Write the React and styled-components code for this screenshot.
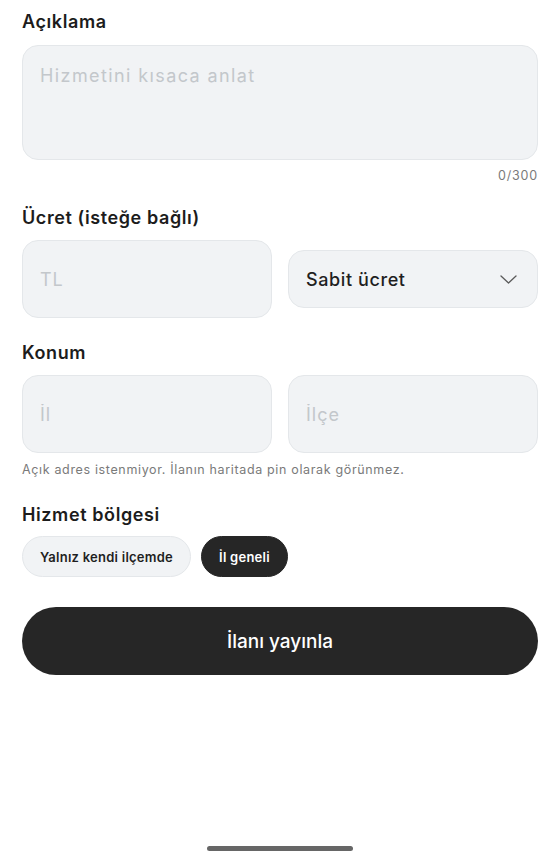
import { useState } from "react";
import styled, { createGlobalStyle } from "styled-components";

const GlobalStyle = createGlobalStyle`
  html, body {
    margin: 0;
    padding: 0;
    background: #ffffff;
  }
  body {
    font-family: Inter, "Noto Sans", "Liberation Sans", sans-serif;
    color: #1f1f1f;
  }
  * {
    box-sizing: border-box;
  }
`;

const MAX = 300;

function App() {
  const [text, setText] = useState("");
  const [area, setArea] = useState("il");

  return (
    <>
      <GlobalStyle />
      <Page>
        <Label>Açıklama</Label>
        <TextArea
          placeholder="Hizmetini kısaca anlat"
          value={text}
          maxLength={MAX}
          onChange={(e) => setText(e.target.value)}
        />
        <Counter>
          {text.length}/{MAX}
        </Counter>

        <Label $top={20}>Ücret (isteğe bağlı)</Label>
        <Row>
          <Input placeholder="TL" />
          <Select type="button">
            <span>Sabit ücret</span>
            <svg width="17" height="9" viewBox="0 0 17 9" fill="none">
              <polyline
                points="1,1 8.5,8 16,1"
                stroke="#5a5a5a"
                strokeWidth="1.3"
                strokeLinecap="round"
                strokeLinejoin="round"
              />
            </svg>
          </Select>
        </Row>

        <Label $top={23}>Konum</Label>
        <Row>
          <Input placeholder="İl" />
          <Input placeholder="İlçe" />
        </Row>
        <Helper>Açık adres istenmiyor. İlanın haritada pin olarak görünmez.</Helper>

        <Label $top={24} $bottom={9}>Hizmet bölgesi</Label>
        <Chips>
          <Chip
            type="button"
            $active={area === "ilce"}
            onClick={() => setArea("ilce")}
          >
            Yalnız kendi ilçemde
          </Chip>
          <Chip
            type="button"
            $active={area === "il"}
            onClick={() => setArea("il")}
          >
            İl geneli
          </Chip>
        </Chips>

        <Submit type="button">İlanı yayınla</Submit>
      </Page>
      <HomeIndicator />
    </>
  );
}

export default App;

const Page = styled.div`
  padding: 10px 22px 0;
  display: flex;
  flex-direction: column;
  min-height: 852px;
`;

const Label = styled.div`
  font-size: 18px;
  font-weight: 600;
  line-height: 24px;
  color: #1c1c1c;
  margin-top: ${(p) => p.$top || 0}px;
  margin-bottom: ${(p) => p.$bottom ?? 10}px;
  letter-spacing: 0.6px;
`;

const fieldBase = `
  background: #f1f3f5;
  border: 1px solid #e4e7ea;
  border-radius: 16px;
  font-family: inherit;
  outline: none;
  &::placeholder {
    color: #c3c7cb;
    font-weight: 400;
  }
`;

const TextArea = styled.textarea`
  ${fieldBase}
  width: 100%;
  height: 115px;
  margin-top: 1px;
  padding: 18px 17px;
  font-size: 18px;
  line-height: 24px;
  letter-spacing: 1.4px;
  resize: none;
  color: #1f1f1f;
`;

const Counter = styled.div`
  align-self: flex-end;
  margin-top: 6px;
  font-size: 12.5px;
  line-height: 20px;
  color: #7a7a7a;
  letter-spacing: 0.8px;
`;

const Row = styled.div`
  display: grid;
  grid-template-columns: 1fr 1fr;
  gap: 16px;
  align-items: center;
`;

const Input = styled.input`
  ${fieldBase}
  width: 100%;
  height: 78px;
  padding: 0 17px;
  font-size: 18px;
  letter-spacing: 1px;
  color: #1f1f1f;
`;

const Select = styled.button`
  ${fieldBase}
  height: 58px;
  width: 100%;
  padding: 0 20px 0 17px;
  display: flex;
  align-items: center;
  justify-content: space-between;
  font-size: 18px;
  font-weight: 500;
  letter-spacing: 0.6px;
  color: #1f1f1f;
  cursor: pointer;
`;

const Helper = styled.div`
  margin-top: 8px;
  font-size: 12.5px;
  line-height: 18px;
  color: #7a7a7a;
  letter-spacing: 0.65px;
`;

const Chips = styled.div`
  display: flex;
  gap: 10px;
`;

const Chip = styled.button`
  height: 41px;
  padding: 0 17px;
  border-radius: 21px;
  font-family: inherit;
  font-size: 13px;
  font-weight: 600;
  letter-spacing: 0.25px;
  cursor: pointer;
  background: ${(p) => (p.$active ? "#262626" : "#f1f3f5")};
  color: ${(p) => (p.$active ? "#ffffff" : "#1f1f1f")};
  border: 1px solid ${(p) => (p.$active ? "#262626" : "#e4e7ea")};
`;

const Submit = styled.button`
  margin-top: 30px;
  height: 68px;
  width: 100%;
  border: none;
  border-radius: 34px;
  background: #262626;
  color: #ffffff;
  font-family: inherit;
  font-size: 19px;
  font-weight: 500;
  cursor: pointer;
`;

const HomeIndicator = styled.div`
  position: fixed;
  left: 50%;
  bottom: 1px;
  width: 146px;
  height: 5px;
  margin-left: -73px;
  border-radius: 3px;
  background: #666666;
`;
